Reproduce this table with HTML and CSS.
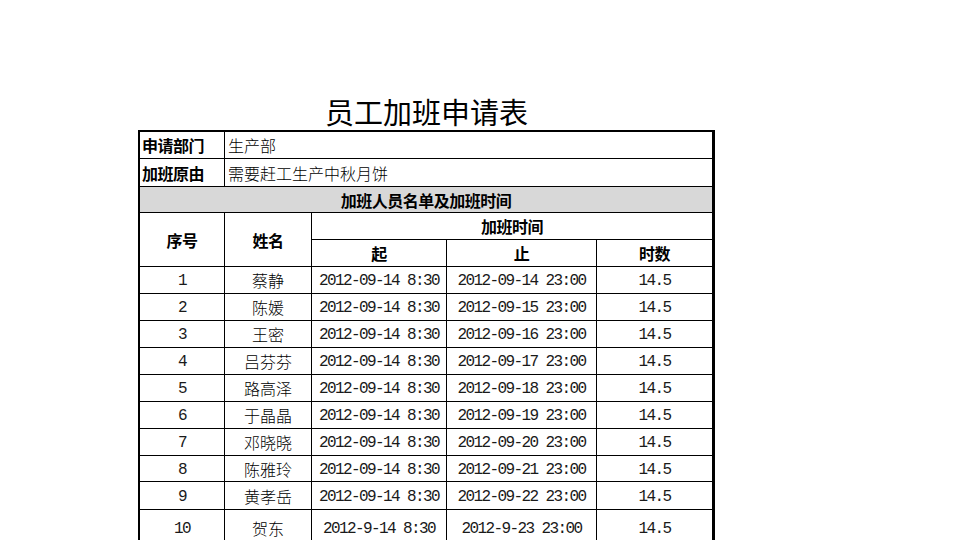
FILE: index.html
```html
<!DOCTYPE html>
<html lang="zh-CN">
<head>
<meta charset="utf-8">
<title>员工加班申请表</title>
<link rel="stylesheet" href="styles.css">
</head>
<body>
<div class="sheet">
  <h1 class="title">员工加班申请表</h1>
  <table class="form">
    <colgroup>
      <col class="c1"><col class="c2"><col class="c3"><col class="c4"><col class="c5">
    </colgroup>
    <tbody>
      <tr class="r27">
        <td class="label">申请部门</td>
        <td class="value" colspan="4">生产部</td>
      </tr>
      <tr class="r28">
        <td class="label">加班原由</td>
        <td class="value" colspan="4">需要赶工生产中秋月饼</td>
      </tr>
      <tr class="r26">
        <td class="band" colspan="5">加班人员名单及加班时间</td>
      </tr>
      <tr class="r27">
        <td class="head" rowspan="2">序号</td>
        <td class="head" rowspan="2">姓名</td>
        <td class="head" colspan="3">加班时间</td>
      </tr>
      <tr class="r27">
        <td class="head">起</td>
        <td class="head">止</td>
        <td class="head">时数</td>
      </tr>
      <tr class="r27"><td class="num">1</td><td class="name">蔡静</td><td class="num">2012-09-14 8:30</td><td class="num">2012-09-14 23:00</td><td class="num">14.5</td></tr>
      <tr class="r27"><td class="num">2</td><td class="name">陈媛</td><td class="num">2012-09-14 8:30</td><td class="num">2012-09-15 23:00</td><td class="num">14.5</td></tr>
      <tr class="r27"><td class="num">3</td><td class="name">王密</td><td class="num">2012-09-14 8:30</td><td class="num">2012-09-16 23:00</td><td class="num">14.5</td></tr>
      <tr class="r27"><td class="num">4</td><td class="name">吕芬芬</td><td class="num">2012-09-14 8:30</td><td class="num">2012-09-17 23:00</td><td class="num">14.5</td></tr>
      <tr class="r27"><td class="num">5</td><td class="name">路高泽</td><td class="num">2012-09-14 8:30</td><td class="num">2012-09-18 23:00</td><td class="num">14.5</td></tr>
      <tr class="r27"><td class="num">6</td><td class="name">于晶晶</td><td class="num">2012-09-14 8:30</td><td class="num">2012-09-19 23:00</td><td class="num">14.5</td></tr>
      <tr class="r27"><td class="num">7</td><td class="name">邓晓晓</td><td class="num">2012-09-14 8:30</td><td class="num">2012-09-20 23:00</td><td class="num">14.5</td></tr>
      <tr class="r26"><td class="num">8</td><td class="name">陈雅玲</td><td class="num">2012-09-14 8:30</td><td class="num">2012-09-21 23:00</td><td class="num">14.5</td></tr>
      <tr class="r28"><td class="num">9</td><td class="name">黄孝岳</td><td class="num">2012-09-14 8:30</td><td class="num">2012-09-22 23:00</td><td class="num">14.5</td></tr>
      <tr class="r36"><td class="num">10</td><td class="name">贺东</td><td class="num">2012-9-14 8:30</td><td class="num">2012-9-23 23:00</td><td class="num">14.5</td></tr>
    </tbody>
  </table>
</div>
</body>
</html>
```

FILE: styles.css
```css
html, body {
  margin: 0;
  padding: 0;
  background: #ffffff;
}

body {
  color: #000000;
  font-family: "Noto Sans CJK SC", "Liberation Sans", sans-serif;
}

.sheet {
  padding: 92px 0 0 138px;
  width: 577px;
}

.title {
  margin: 0;
  height: 38px;
  line-height: 38px;
  font-size: 29px;
  font-weight: 400;
  text-align: center;
  letter-spacing: 0;
}

.form {
  table-layout: fixed;
  border-collapse: separate;
  border-spacing: 0;
  width: 577px;
  border-top: 2px solid #000;
  border-left: 2px solid #000;
  border-right: 3px solid #000;
}

.c1 { width: 85px; }
.c2 { width: 87px; }
.c3 { width: 135px; }
.c4 { width: 150px; }
.c5 { width: 115px; }

.form td {
  box-sizing: border-box;
  border-right: 1px solid #000;
  border-bottom: 1px solid #000;
  padding: 0;
  font-size: 16px;
  line-height: 20px;
  text-align: center;
  vertical-align: middle;
  white-space: nowrap;
  overflow: hidden;
}

.form td:last-child {
  border-right: 0;
}

.r26 td { height: 26px; }
.r27 td { height: 27px; }
.r28 td { height: 28px; }
.r36 td { height: 36px; }

.form td.label {
  font-weight: 700;
  text-align: left;
  padding-left: 2px;
  letter-spacing: -0.5px;
}

.form td.value {
  text-align: left;
  padding-left: 3px;
  font-weight: 300;
}

.form td.band {
  background: #d8d8d8;
  font-weight: 700;
  letter-spacing: -0.5px;
}

.form td.head {
  font-weight: 700;
  letter-spacing: -0.5px;
}

.form td.head[rowspan] {
  border-right: 1px solid #000;
}

.form td.name {
  font-weight: 300;
}

.form td.num {
  font-family: "Liberation Mono", "DejaVu Sans Mono", monospace;
  font-size: 16px;
  letter-spacing: -1.6px;
  color: #1a1a1a;
  padding-top: 2px;
}
```
